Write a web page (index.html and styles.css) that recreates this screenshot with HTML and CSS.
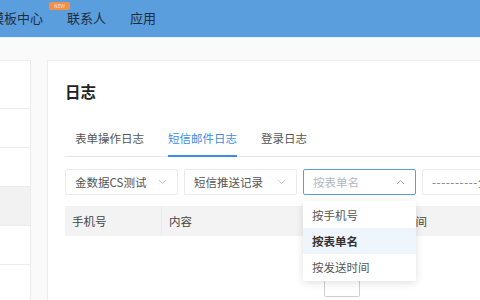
FILE: index.html
```html
<!DOCTYPE html>
<html lang="zh-CN">
<head>
  <meta charset="UTF-8">
  <title>日志</title>
  <link rel="stylesheet" href="styles.css">
</head>
<body>
  <header class="topbar">
    <nav class="nav">
      <a class="nav-item">模板中心<span class="badge">NEW</span></a>
      <a class="nav-item">联系人</a>
      <a class="nav-item">应用</a>
    </nav>
  </header>

  <div class="layout">
    <aside class="sidebar">
      <div class="side-row first"></div>
      <div class="side-row"></div>
      <div class="side-row"></div>
      <div class="side-row active"></div>
      <div class="side-row"></div>
      <div class="side-row"></div>
    </aside>

    <main class="panel">
      <h1 class="title">日志</h1>

      <div class="tabs">
        <a class="tab">表单操作日志</a>
        <a class="tab active">短信邮件日志</a>
        <a class="tab">登录日志</a>
      </div>

      <div class="filters">
        <div class="select">
          <span class="select-text">金数据CS测试</span>
          <svg class="chev" width="9" height="6" viewBox="0 0 9 6"><polyline points="1,1 4.5,4.5 8,1" fill="none" stroke="#c6cad1" stroke-width="1"/></svg>
        </div>
        <div class="select">
          <span class="select-text">短信推送记录</span>
          <svg class="chev" width="9" height="6" viewBox="0 0 9 6"><polyline points="1,1 4.5,4.5 8,1" fill="none" stroke="#c6cad1" stroke-width="1"/></svg>
        </div>
        <div class="select-wrap">
          <div class="select focused">
            <span class="select-text placeholder">按表单名</span>
            <svg class="chev" width="9" height="6" viewBox="0 0 9 6"><polyline points="1,5 4.5,1.5 8,5" fill="none" stroke="#a9aeb6" stroke-width="1"/></svg>
          </div>
          <ul class="dropdown">
            <li class="option">按手机号</li>
            <li class="option selected">按表单名</li>
            <li class="option">按发送时间</li>
          </ul>
        </div>
        <div class="select range">
          <span class="select-text dashes">----------全部</span>
        </div>
      </div>

      <div class="table">
        <div class="thead">
          <div class="th col-phone">手机号</div>
          <div class="th col-content">内容</div>
          <div class="th col-time">发送时间</div>
        </div>
        <div class="tbody">
          <div class="empty-icon"></div>
        </div>
      </div>
    </main>
  </div>
</body>
</html>
```

FILE: styles.css
```css
body {
  margin: 0;
  width: 480px;
  height: 300px;
  overflow: hidden;
  font-family: "Noto Sans CJK SC", "Noto Sans", sans-serif;
  font-size: 11.5px;
  color: #333;
  background: #fafafa;
}

.topbar {
  height: 37px;
  background: #5a9edd;
  border-bottom: 1px solid #e4f0fb;
}
.nav { display: flex; gap: 24px; margin-left: -9px; height: 37px; align-items: center; }
.nav-item { position: relative; color: #1f2d3d; font-size: 13px; line-height: 20px; margin-top: -2px; }
.badge {
  position: absolute;
  left: 58px;
  top: -6px;
  width: 21px;
  height: 8px;
  background: #f0904a;
  border-radius: 2px;
  color: #fde3cf;
  font-size: 5px;
  line-height: 8px;
  text-align: center;
}

.layout { display: flex; padding-top: 22px; gap: 16px; }

.sidebar {
  width: 30px;
  flex: none;
  background: #fff;
  border: 1px solid #ececec;
  border-left: none;
  height: 260px;
}
.side-row { height: 38px; border-bottom: 1px solid #ececec; }
.side-row.first { height: 47px; }
.side-row.active { background: #f2f2f2; }

.panel {
  flex: none;
  width: 588px;
  height: 260px;
  background: #fff;
  border: 1px solid #ececec;
  padding: 20px 17px 0;
  box-sizing: border-box;
}

.title { margin: 0; font-size: 15.5px; line-height: 20px; font-weight: 700; color: #222; }

.tabs {
  display: flex;
  gap: 24px;
  padding-left: 10px;
  margin-top: 27px;
  border-bottom: 1px solid #e4e7ed;
}
.tab {
  color: #555;
  line-height: 21px;
  padding-bottom: 6px;
  border-bottom: 2px solid transparent;
  margin-bottom: -1px;
}
.tab.active { color: #3c8ee4; border-bottom-color: #3c8ee4; }

.filters { display: flex; gap: 6px; margin-top: 12px; }
.select {
  width: 113px;
  height: 26px;
  box-sizing: border-box;
  border: 1px solid #ebebeb;
  border-radius: 2px;
  display: flex;
  align-items: center;
  justify-content: space-between;
  padding: 0 9px;
  background: #fff;
  flex: none;
}
.select-text { color: #555; white-space: nowrap; }
.select.focused { border-color: #5a9edd; }
.placeholder { color: #b4b8bf; }
.range { width: 140px; }
.dashes { color: #777; letter-spacing: 0.6px; }
.chev { flex: none; margin-right: 1px; }

.select-wrap { position: relative; }
.dropdown {
  position: absolute;
  top: 32px;
  left: 0;
  width: 113px;
  margin: 0;
  padding: 1px 0;
  list-style: none;
  background: #fff;
  box-shadow: 0 2px 8px rgba(0, 0, 0, 0.12);
  z-index: 2;
}
.option { height: 26px; line-height: 26px; padding-left: 9px; color: #555; }
.option.selected { background: #eef5fd; font-weight: 700; color: #333; }

.table { margin-top: 11px; width: 554px; }
.thead { display: grid; grid-template-columns: 97px 212px 1fr; height: 30px; background: #f3f3f3; }
.th { line-height: 30px; padding-left: 7px; color: #444; }
.col-phone { border-right: 1px solid #ececec; }
.tbody { display: flex; justify-content: center; padding-top: 41px; }
.empty-icon {
  width: 34px;
  height: 18px;
  border: 1px solid #cfcfcf;
  border-radius: 2px;
}
```
